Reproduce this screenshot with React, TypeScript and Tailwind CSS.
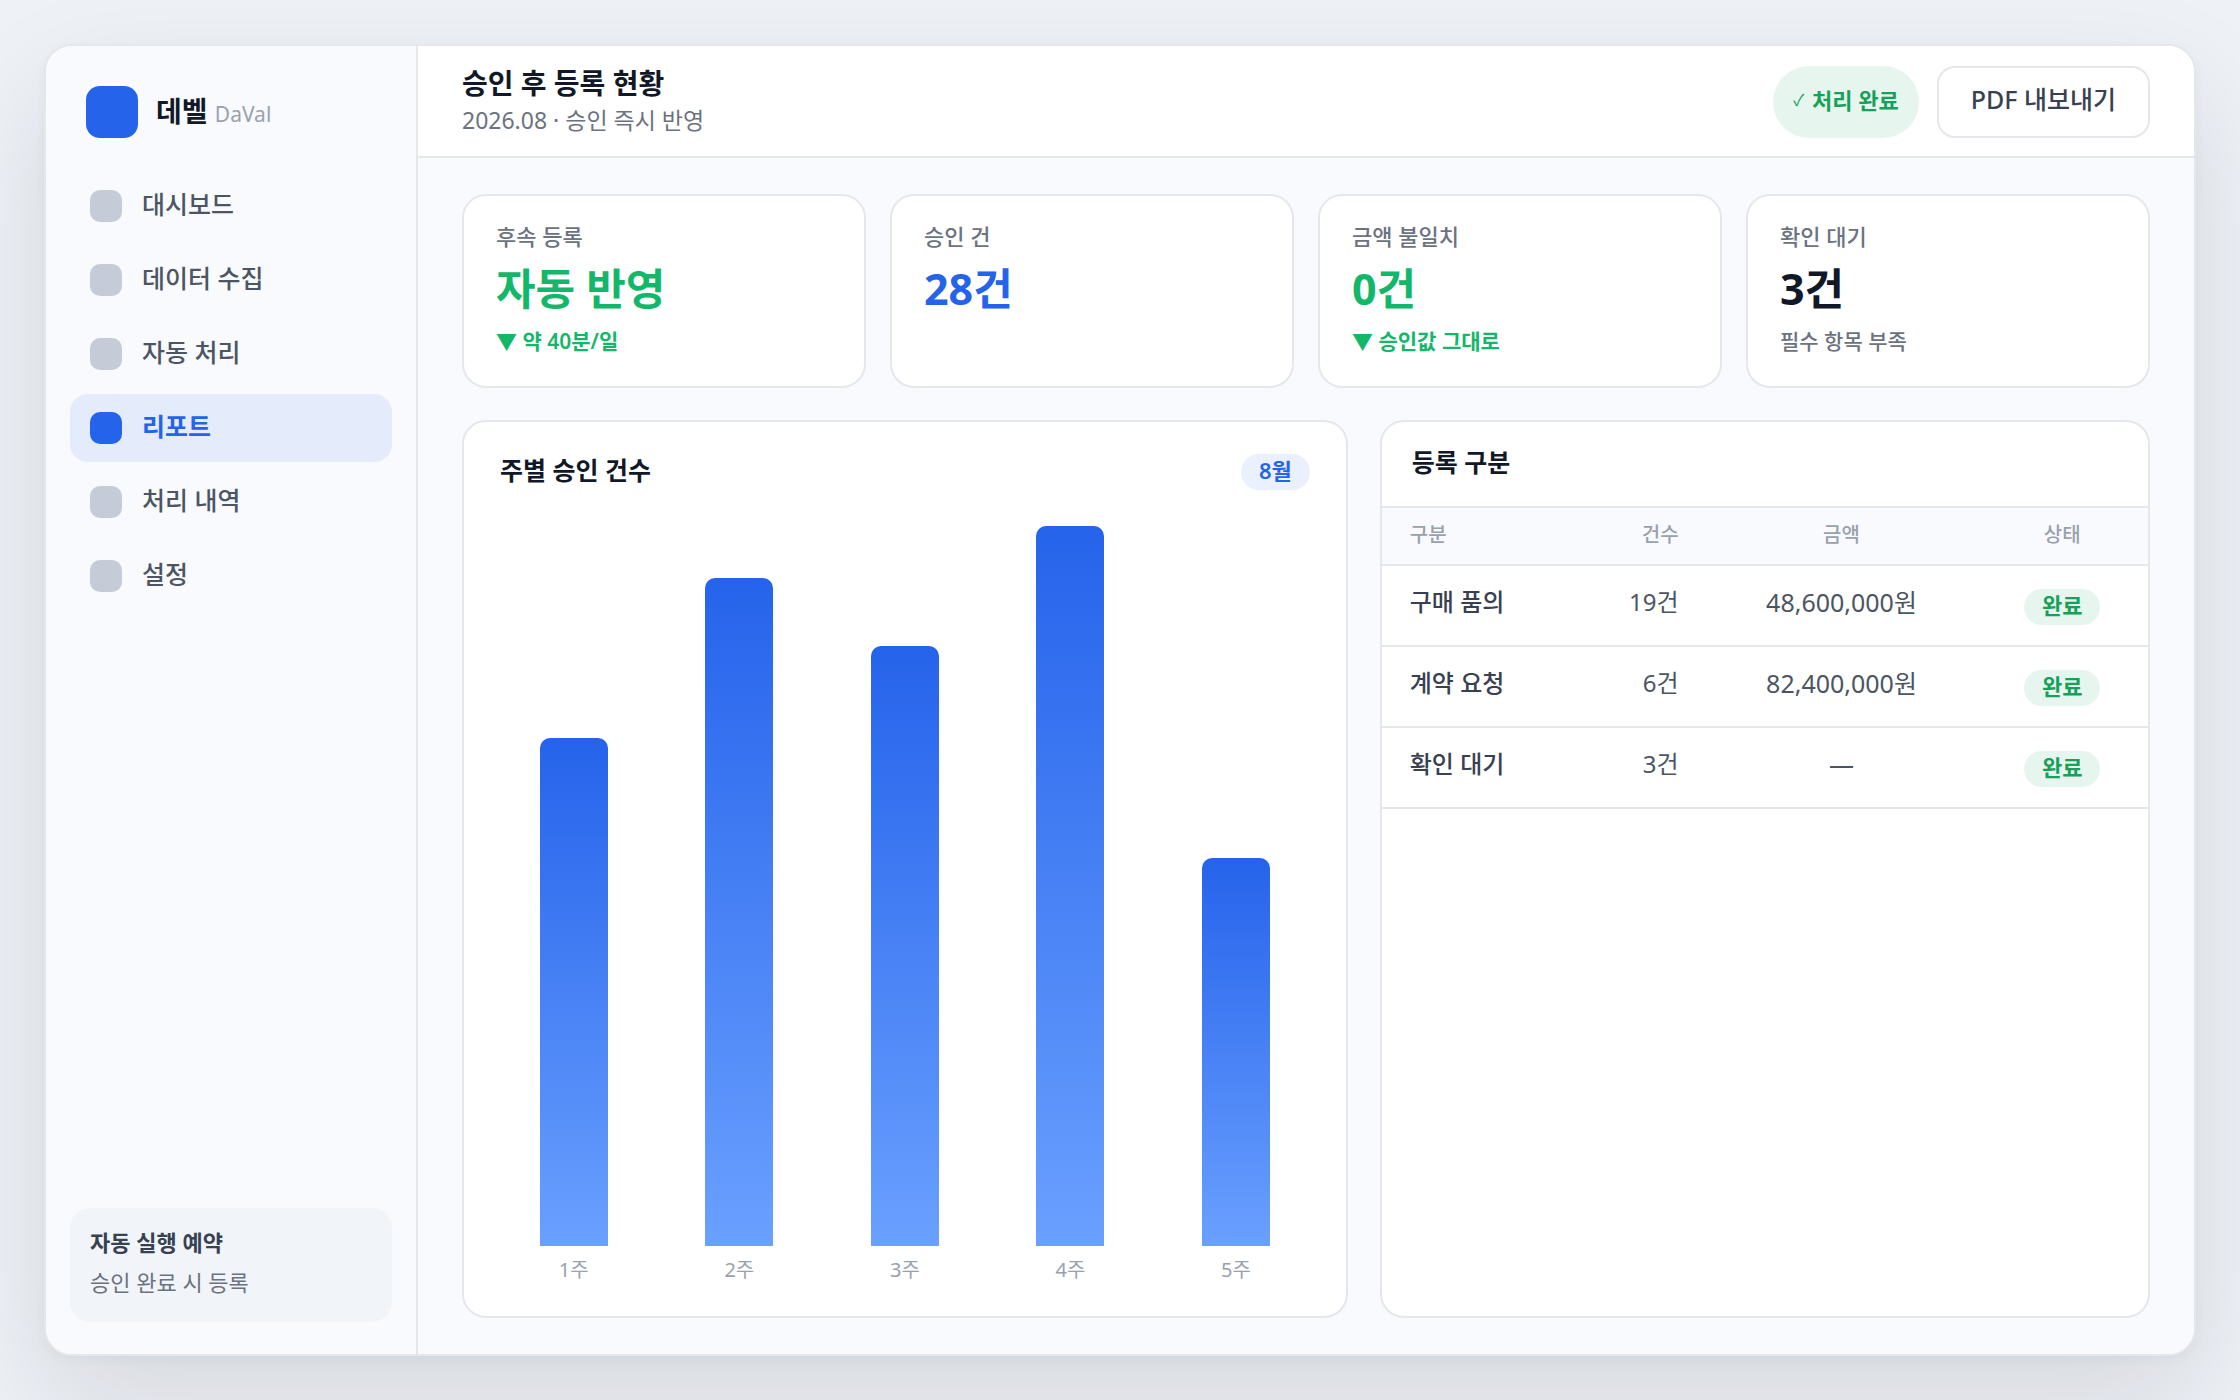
type Tone = "green" | "blue" | "dark";

const toneClass: Record<Tone, string> = {
  green: "text-[#12b76a]",
  blue: "text-[#2563eb]",
  dark: "text-[#111827]",
};

const navItems = ["대시보드", "데이터 수집", "자동 처리", "리포트", "처리 내역", "설정"];

const stats: { label: string; value: string; tone: Tone; note?: string; down?: boolean }[] = [
  { label: "후속 등록", value: "자동 반영", tone: "green", note: "▼ 약 40분/일", down: true },
  { label: "승인 건", value: "28건", tone: "blue" },
  { label: "금액 불일치", value: "0건", tone: "green", note: "▼ 승인값 그대로", down: true },
  { label: "확인 대기", value: "3건", tone: "dark", note: "필수 항목 부족" },
];

const weeks = [
  { label: "1주", height: 70.5 },
  { label: "2주", height: 92.8 },
  { label: "3주", height: 83.3 },
  { label: "4주", height: 100 },
  { label: "5주", height: 53.9 },
];

const rows = [
  { kind: "구매 품의", count: "19건", amount: "48,600,000원" },
  { kind: "계약 요청", count: "6건", amount: "82,400,000원" },
  { kind: "확인 대기", count: "3건", amount: "—" },
];

function Sidebar({ active }: { active: string }) {
  return (
    <aside className="flex w-[372px] shrink-0 flex-col border-r-2 border-gray-200 bg-[#f8fafe] px-6 pt-10 pb-8">
      <div className="flex items-center gap-[18px] px-4">
        <div className="size-[52px] rounded-[14px] bg-[#2563eb]" />
        <div className="text-[28px] leading-9 font-bold text-[#111827]">
          데벨 <span className="text-[21px] font-normal text-gray-400">DaVal</span>
        </div>
      </div>

      <nav className="mt-[34px] flex flex-col gap-[6px]">
        {navItems.map((item) => {
          const isActive = item === active;
          return (
            <a
              key={item}
              href="#"
              className={`flex h-[68px] items-center gap-5 rounded-[18px] px-5 text-[25px] leading-9 ${
                isActive
                  ? "bg-[#e4ebfb] font-semibold text-[#2563eb]"
                  : "font-medium text-[#4b5563]"
              }`}
            >
              <span
                className={`size-8 rounded-[10px] ${isActive ? "bg-[#2563eb]" : "bg-[#c5ccd7]"}`}
              />
              <span className="pb-1">{item}</span>
            </a>
          );
        })}
      </nav>

      <div className="mt-auto rounded-[20px] bg-[#f1f4f9] px-5 pt-[14px] pb-5 text-[22px] leading-10">
        <div className="font-semibold text-[#374151]">자동 실행 예약</div>
        <div className="text-[#6b7280]">승인 완료 시 등록</div>
      </div>
    </aside>
  );
}

function StatCard({ label, value, tone, note, down = false }: (typeof stats)[number]) {
  return (
    <div className="h-[194px] rounded-3xl border-2 border-gray-200 bg-white px-8 pt-6">
      <div className="text-[22px] leading-8 font-medium text-[#6b7280]">{label}</div>
      <div className={`mt-1 text-[43px] leading-[66px] font-bold ${toneClass[tone]}`}>{value}</div>
      {note && (
        <div
          className={`text-[21px] leading-[38px] ${
            down ? "font-semibold text-[#12b76a]" : "font-medium text-[#6b7280]"
          }`}
        >
          {note}
        </div>
      )}
    </div>
  );
}

function WeeklyChart() {
  return (
    <section className="flex min-w-0 flex-col rounded-3xl border-2 border-gray-200 bg-white px-9 py-8">
      <div className="flex items-start justify-between">
        <h2 className="text-[25px] leading-8 font-bold text-[#111827]">주별 승인 건수</h2>
        <span className="h-9 rounded-full bg-[#eaf0fe] px-[18px] text-[22px] leading-8 font-semibold text-[#2563eb]">
          8월
        </span>
      </div>
      <div className="mt-9 flex flex-1 gap-[18px]">
        {weeks.map((w) => (
          <div key={w.label} className="flex flex-1 flex-col">
            <div className="flex flex-1 items-end justify-center">
              <div
                className="w-[68px] rounded-t-[10px] bg-linear-to-b/srgb from-[#2563eb] to-[#6aa0ff]"
                style={{ height: `${w.height}%` }}
              />
            </div>
            <div className="mt-[10px] text-center text-[20px] leading-7 text-gray-400">{w.label}</div>
          </div>
        ))}
      </div>
    </section>
  );
}

function CategoryTable() {
  return (
    <section className="min-w-0 overflow-hidden rounded-3xl border-2 border-gray-200 bg-white">
      <h2 className="h-[84px] px-[30px] pt-[22px] text-[25px] leading-9 font-bold text-[#111827]">
        등록 구분
      </h2>
      <table className="w-full table-fixed border-collapse">
        <thead>
          <tr className="h-[58px] border-y-2 border-gray-200 bg-[#f8fafe] text-[20px] leading-[30px] text-gray-400">
            <th className="w-[21.2%] px-7 pb-[2px] text-left font-medium">구분</th>
            <th className="w-[21.2%] px-7 pb-[2px] text-right font-medium">건수</th>
            <th className="w-[35.2%] px-7 pb-[2px] text-center font-medium">금액</th>
            <th className="px-7 pb-[2px] text-center font-medium">상태</th>
          </tr>
        </thead>
        <tbody>
          {rows.map((r) => (
            <tr key={r.kind} className="h-[81px] border-b-2 border-gray-200 text-[24px] leading-9 text-[#4b5563]">
              <td className="pb-2 pl-7 font-medium whitespace-nowrap text-[#374151]">{r.kind}</td>
              <td className="px-7 pb-2 text-right">{r.count}</td>
              <td className="pb-2 text-center text-[25px] whitespace-nowrap">{r.amount}</td>
              <td className="text-center">
                <span className="inline-block h-9 rounded-full bg-[#e6f6ee] px-[18px] align-middle text-[22px] leading-8 font-semibold text-[#16a05a]">
                  완료
                </span>
              </td>
            </tr>
          ))}
        </tbody>
      </table>
    </section>
  );
}

export default function App() {
  return (
    <div className="flex min-h-screen bg-[#eef1f6] p-11 font-['Noto_Sans','Noto_Sans_CJK_KR',sans-serif]">
      <div className="flex flex-1 overflow-hidden rounded-[28px] border-2 border-gray-200 bg-white shadow-[0_48px_120px_rgba(17,24,39,0.11),0_4px_12px_rgba(17,24,39,0.04)]">
        <Sidebar active="리포트" />

        <main className="flex min-w-0 flex-1 flex-col bg-[#f8fafe]">
          <header className="flex items-start justify-between border-b-2 border-gray-200 bg-white px-11 pt-5 pb-[18px]">
            <div>
              <h1 className="text-[28px] leading-[34px] font-bold text-[#111827]">승인 후 등록 현황</h1>
              <p className="mt-[2px] text-[23px] leading-9 text-[#6b7280]">2026.08 · 승인 즉시 반영</p>
            </div>
            <div className="flex gap-[18px]">
              <span className="flex h-[72px] items-center gap-2 rounded-full bg-[#e6f6ee] px-5 pb-1 text-[22px] font-semibold text-[#16a05a]">
                <span className="text-[16px] font-normal">✓</span>
                처리 완료
              </span>
              <button
                type="button"
                className="h-[72px] rounded-[18px] border-2 border-gray-200 bg-white px-8 pb-1 text-[25px] font-medium text-[#374151]"
              >
                PDF 내보내기
              </button>
            </div>
          </header>

          <div className="flex flex-1 flex-col gap-8 px-11 py-9">
            <div className="grid grid-cols-4 gap-6">
              {stats.map((s) => (
                <StatCard key={s.label} {...s} />
              ))}
            </div>
            <div className="grid flex-1 grid-cols-[1.15fr_1fr] gap-8">
              <WeeklyChart />
              <CategoryTable />
            </div>
          </div>
        </main>
      </div>
    </div>
  );
}
